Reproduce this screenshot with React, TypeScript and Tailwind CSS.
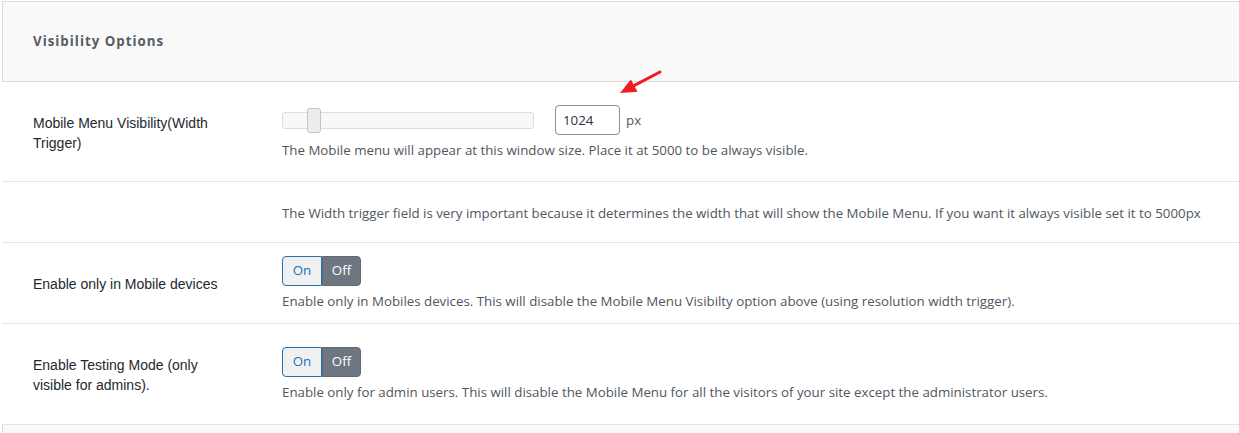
import { useState } from 'react';

const label = "font-['Liberation_Sans',Arial,sans-serif] text-[14px] leading-[20px] text-[#23282d]";
const desc = "font-['Open_Sans',sans-serif] text-[13.3px] leading-[20px] text-[#50575e]";

const Toggle = () => {
  const [on, setOn] = useState(false);
  return (
    <div className="flex h-[30px] w-[79px] font-['Open_Sans',sans-serif] text-[13.3px]">
      <button
        onClick={() => setOn(true)}
        className={`flex w-[40px] items-center justify-center rounded-l-[4px] border ${
          on ? 'border-[#2271b1] bg-[#2271b1] text-white' : 'border-[#2271b1] bg-[#f0f0f1] text-[#2271b1]'
        }`}
      >
        On
      </button>
      <button
        onClick={() => setOn(false)}
        className={`flex flex-1 items-center justify-center rounded-r-[4px] border ${
          on ? 'border-[#c3c4c7] bg-[#f0f0f1] text-[#50575e]' : 'border-[#646970] bg-[#6c7781] text-white'
        }`}
      >
        Off
      </button>
    </div>
  );
};

const Row = ({
  title,
  children,
  className = '',
}: {
  title?: React.ReactNode;
  children: React.ReactNode;
  className?: string;
}) => (
  <div className={`flex border-b border-[#e5e5e5] ${className}`}>
    <div className={`flex w-[280px] shrink-0 items-center pl-[31px] pr-[60px] ${label}`}>
      <span className="mt-[2px]">{title}</span>
    </div>
    <div className="flex flex-col justify-center">{children}</div>
  </div>
);

const App = () => {
  const [width, setWidth] = useState(1024);
  return (
    <div className="min-h-screen bg-white pt-[1px] pl-[2px]">
      {/* Section header */}
      <div className="flex h-[81px] items-center border border-r-0 border-[#dcdcde] bg-[#f9f9f9] pl-[30px]">
        <h2 className="font-['Open_Sans',sans-serif] text-[13.3px] font-bold tracking-[1px] text-[#555d66]">
          Visibility Options
        </h2>
      </div>

      <Row title="Mobile Menu Visibility(Width Trigger)" className="h-[100px]">
        <div className="mt-[2px] flex items-center">
          <div className="relative h-[17px] w-[252px] rounded-[3px] border border-[#dddddd] bg-[#f8f8f8]">
            <span className="absolute -top-[5px] left-[24px] h-[25px] w-[14px] rounded-[3px] border border-[#c5c5c5] bg-[#ececec]" />
          </div>
          <input
            value={width}
            onChange={(e) => setWidth(Number(e.target.value) || 0)}
            className="ml-[21px] h-[30px] w-[65px] rounded-[4px] border border-[#8c8f94] px-[7px] font-['Open_Sans',sans-serif] text-[13.3px] text-[#2c3338] outline-none"
          />
          <span className={`ml-[6px] ${desc} text-[#3c434a]`}>px</span>
        </div>
        <p className={`mt-[5px] ${desc}`}>
          The Mobile menu will appear at this window size. Place it at 5000 to be always visible.
        </p>
      </Row>

      <Row className="h-[61px]">
        <p className={`mt-[1px] ${desc}`}>
          The Width trigger field is very important because it determines the width that will show the Mobile Menu. If
          you want it always visible set it to 5000px
        </p>
      </Row>

      <Row title="Enable only in Mobile devices" className="h-[81px]">
        <Toggle />
        <p className={`mt-[5px] ${desc}`}>
          Enable only in Mobiles devices. This will disable the Mobile Menu Visibilty option above (using resolution
          width trigger).
        </p>
      </Row>

      <Row title="Enable Testing Mode (only visible for admins)." className="h-[101px]">
        <Toggle />
        <p className={`mt-[5px] ${desc}`}>
          Enable only for admin users. This will disable the Mobile Menu for all the visitors of your site except the
          administrator users.
        </p>
      </Row>

      <div className="h-[20px] border-l border-[#dcdcde] bg-[#f9f9f9]" />

      {/* Annotation arrow */}
      <svg className="pointer-events-none absolute left-[610px] top-[65px]" width="60" height="40" viewBox="0 0 60 40">
        <line x1="50" y1="7" x2="24" y2="20.6" stroke="#ee1c1c" strokeWidth="3" strokeLinecap="round" />
        <polygon points="10,28 20.9,14.4 27.5,26.8" fill="#ee1c1c" />
      </svg>
    </div>
  );
};

export default App;
